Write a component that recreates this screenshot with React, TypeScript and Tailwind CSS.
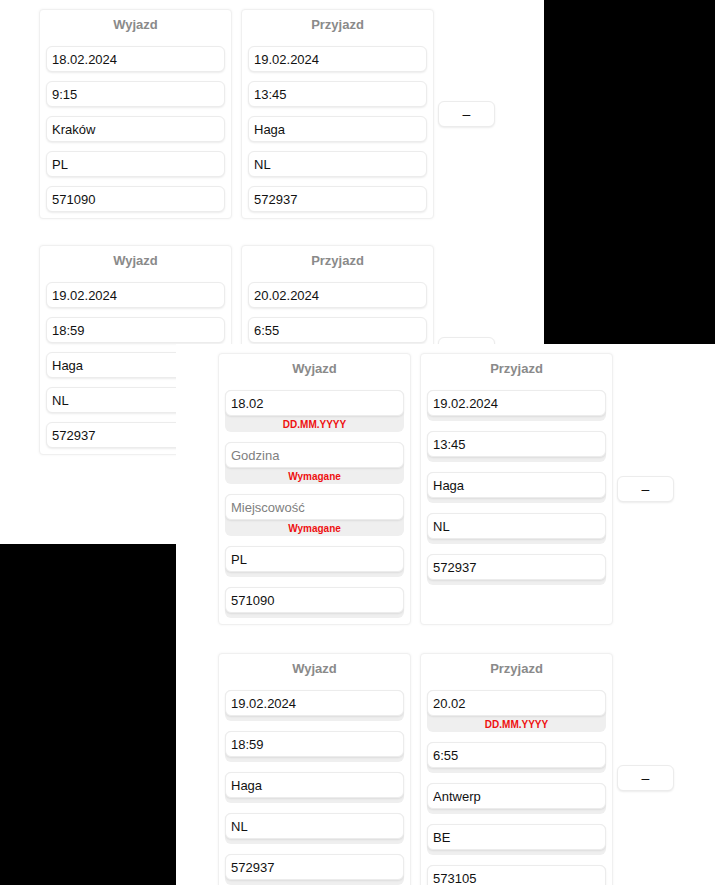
import React from "react";

type Field = { value?: string; placeholder?: string; error?: string };
type Group = { dep: Field[]; arr: Field[] };

const shotA: Group[] = [
  {
    dep: [{ value: "18.02.2024" }, { value: "9:15" }, { value: "Kraków" }, { value: "PL" }, { value: "571090" }],
    arr: [{ value: "19.02.2024" }, { value: "13:45" }, { value: "Haga" }, { value: "NL" }, { value: "572937" }],
  },
  {
    dep: [{ value: "19.02.2024" }, { value: "18:59" }, { value: "Haga" }, { value: "NL" }, { value: "572937" }],
    arr: [{ value: "20.02.2024" }, { value: "6:55" }, { value: "Antwerp" }, { value: "BE" }, { value: "573105" }],
  },
];

const shotB: Group[] = [
  {
    dep: [
      { value: "18.02", error: "DD.MM.YYYY" },
      { placeholder: "Godzina", error: "Wymagane" },
      { placeholder: "Miejscowość", error: "Wymagane" },
      { value: "PL" },
      { value: "571090" },
    ],
    arr: [{ value: "19.02.2024" }, { value: "13:45" }, { value: "Haga" }, { value: "NL" }, { value: "572937" }],
  },
  {
    dep: [{ value: "19.02.2024" }, { value: "18:59" }, { value: "Haga" }, { value: "NL" }, { value: "572937" }],
    arr: [
      { value: "20.02", error: "DD.MM.YYYY" },
      { value: "6:55" },
      { value: "Antwerp" },
      { value: "BE" },
      { value: "573105" },
    ],
  },
];

function PlainInput({ f }: { f: Field }) {
  return (
    <input
      readOnly
      value={f.value ?? ""}
      placeholder={f.placeholder}
      className="block h-[26px] w-full rounded-md border border-[#ececec] bg-white px-[5px] text-[13px] text-[#111] shadow-[0_1px_2px_rgba(0,0,0,0.08)] outline-none placeholder:text-[#808080]"
    />
  );
}

function CheckedInput({ f }: { f: Field }) {
  return (
    <div className="rounded-md bg-[#efefef]">
      <PlainInput f={f} />
      {f.error ? (
        <div className="flex h-[16px] items-center justify-center text-[10px] font-bold text-[#ee1111]">{f.error}</div>
      ) : (
        <div className="h-[5px]" />
      )}
    </div>
  );
}

function Card({ title, fields, checked }: { title: string; fields: Field[]; checked: boolean }) {
  return (
    <div className="w-[193px] rounded border border-[#f0f0f0] bg-white px-[6px] pb-[6px] shadow-[0_0_3px_rgba(0,0,0,0.05)]">
      <div className="h-[36px] pt-[7px] text-center text-[13px] leading-[15px] font-bold text-[#8a8a8a]">{title}</div>
      <div className={checked ? "flex flex-col gap-[10px]" : "flex flex-col gap-[9px]"}>
        {fields.map((f, i) => (checked ? <CheckedInput key={i} f={f} /> : <PlainInput key={i} f={f} />))}
      </div>
    </div>
  );
}

function Row({ g, checked }: { g: Group; checked: boolean }) {
  return (
    <div className="flex items-center">
      <div className="flex items-stretch gap-[9px]">
        <Card title="Wyjazd" fields={g.dep} checked={checked} />
        <Card title="Przyjazd" fields={g.arr} checked={checked} />
      </div>
      <button className="ml-[4px] flex h-[26px] w-[57px] items-center justify-center rounded-md border border-[#ececec] bg-white text-[14px] text-[#111] shadow-[0_1px_2px_rgba(0,0,0,0.08)]">
        –
      </button>
    </div>
  );
}

export default function App() {
  return (
    <div className="relative h-[885px] w-[715px] overflow-hidden bg-black font-['Liberation_Sans',Arial,sans-serif]">
      {/* older screenshot, top left */}
      <div className="absolute left-0 top-0 h-[544px] w-[544px] overflow-hidden bg-white">
        <div className="flex flex-col gap-[26px] pl-[39px] pt-[9px]">
          {shotA.map((g, i) => (
            <Row key={i} g={g} checked={false} />
          ))}
        </div>
      </div>

      {/* newer screenshot with validation, bottom right */}
      <div className="absolute left-[176px] top-[344px] h-[541px] w-[539px] overflow-hidden bg-white">
        <div className="flex flex-col gap-[28px] pl-[42px] pt-[9px]">
          {shotB.map((g, i) => (
            <Row key={i} g={g} checked={true} />
          ))}
        </div>
      </div>
    </div>
  );
}
